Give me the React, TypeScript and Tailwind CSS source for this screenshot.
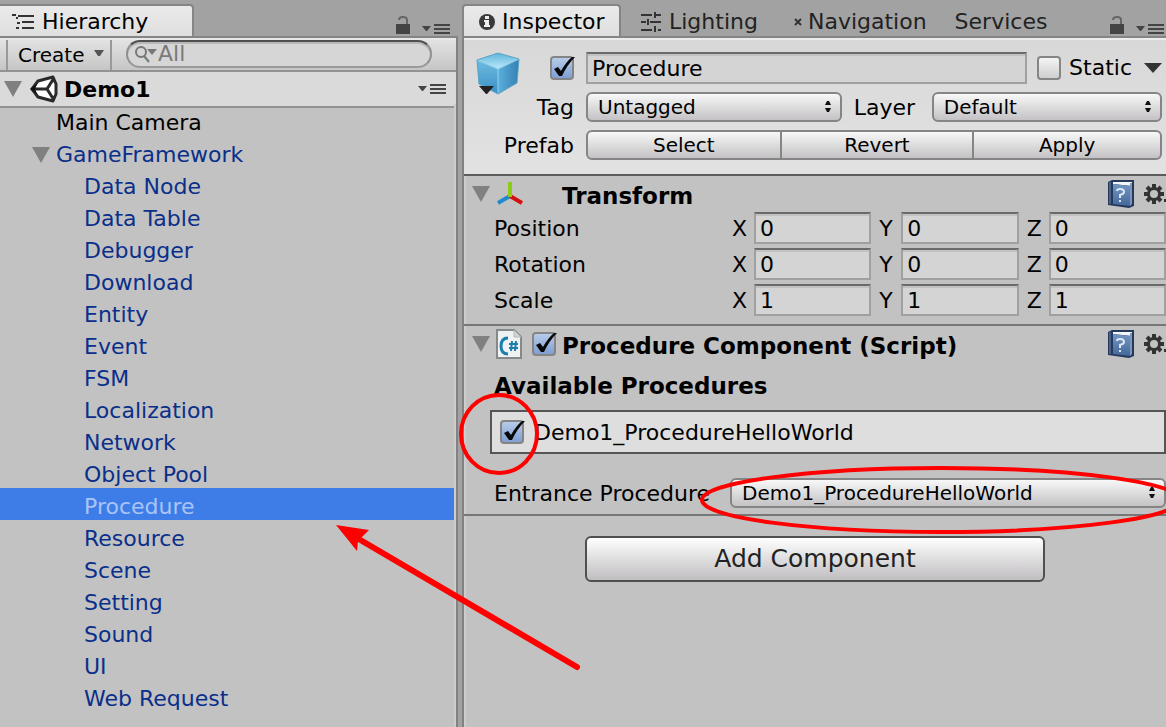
import { useState } from 'react';
import type { ReactNode } from 'react';
import clsx from 'clsx';

const CHILDREN = [
  'Data Node',
  'Data Table',
  'Debugger',
  'Download',
  'Entity',
  'Event',
  'FSM',
  'Localization',
  'Network',
  'Object Pool',
  'Procedure',
  'Resource',
  'Scene',
  'Setting',
  'Sound',
  'UI',
  'Web Request',
];

const TRANSFORM = [
  { label: 'Position', values: ['0', '0', '0'] },
  { label: 'Rotation', values: ['0', '0', '0'] },
  { label: 'Scale', values: ['1', '1', '1'] },
];

const AXES = ['X', 'Y', 'Z'];

const FIELD =
  'min-w-0 border-2 border-t-[#6a6a6a] border-x-[#a0a0a0] border-b-[#a0a0a0] bg-[#d4d4d4] px-1 outline-none shadow-[inset_0_2px_0_#c2c2c2]';

/* ---------- icons ---------- */

const Foldout = () => (
  <svg viewBox="0 0 18 16" className="h-4 w-[18px] shrink-0">
    <path d="M0 0H18L9 16Z" fill="#808080" />
  </svg>
);

const HierarchyIcon = () => (
  <svg viewBox="0 0 24 18" className="h-[18px] w-6 shrink-0" fill="#333">
    <path d="M0 1h4v2H0zM6 2h16v2H6zM4 4h2v2H4zM10 8h12v2H10zM5 9h3v2H5zM4 14h3v2H4zM10 14h12v2H10z" />
  </svg>
);

const LockIcon = () => (
  <svg viewBox="0 0 14 18" className="h-[18px] w-3.5 shrink-0">
    <path d="M3 4Q3 1 7 1Q11 1 11 4V9" fill="none" stroke="#666" strokeWidth="2" />
    <path d="M0 8H14V18H0Z" fill="#444" />
  </svg>
);

const MenuIcon = () => (
  <svg viewBox="0 0 28 10" className="h-2.5 w-7 shrink-0" fill="#444">
    <path d="M0 2H9L5 7H4ZM12 0H28V2H12ZM12 4H28V6H12ZM12 8H28V10H12Z" />
  </svg>
);

const UnityIcon = () => (
  <svg viewBox="0 0 28 28" className="size-7 shrink-0">
    <path d="M2 14L8 6L23 1L27 14L23 27L8 22Z" fill="#fff" />
    <path
      d="M2 14L8 6L23 2L26 9V19L23 26L8 22Z M3 14H17M17 14L24 3M17 14L24 25"
      fill="none"
      stroke="#2a2a2a"
      strokeWidth="3"
      strokeLinejoin="round"
    />
    <path d="M0 14L7 9L5 14L7 19Z" fill="#111" />
  </svg>
);

const InfoIcon = () => (
  <svg viewBox="0 0 18 18" className="size-[18px] shrink-0">
    <circle cx="9" cy="9" r="8" fill="#3a3a3a" />
    <path d="M7 3h4v3H7zM6 7h5v5h1v2H6v-2h1V9H6z" fill="#eee" />
  </svg>
);

const SlidersIcon = () => (
  <svg viewBox="0 0 20 22" className="h-[22px] w-5 shrink-0" fill="#333">
    <path d="M0 3h11v2H0zM13 1h2v6h-2zM15 3h5v2h-5zM0 10h5v2H0zM6 8h2v6H6zM9 10h11v2H9zM0 18h11v2H0zM13 15h2v6h-2zM17 18h3v2h-3z" />
  </svg>
);

const CubeIcon = () => (
  <svg viewBox="0 0 44 44" className="size-11 shrink-0">
    <defs>
      <linearGradient id="cubeTop" x1="0" y1="0" x2="0" y2="1">
        <stop offset="0" stopColor="#5fb4da" />
        <stop offset="1" stopColor="#bdeafa" />
      </linearGradient>
      <linearGradient id="cubeLeft" x1="0" y1="0" x2="0" y2="1">
        <stop offset="0" stopColor="#6fbce2" />
        <stop offset="1" stopColor="#3b8fc3" />
      </linearGradient>
      <linearGradient id="cubeRight" x1="0" y1="0" x2="1" y2="0">
        <stop offset="0" stopColor="#5cb0db" />
        <stop offset="1" stopColor="#347fb3" />
      </linearGradient>
    </defs>
    <path d="M1 8L22 1L43 7L22 17Z" fill="url(#cubeTop)" />
    <path d="M1 8L22 17V42L3 32Z" fill="url(#cubeLeft)" />
    <path d="M22 17L43 7L41 31L22 42Z" fill="url(#cubeRight)" />
    <path d="M1 8L22 17L43 7M22 17V42" fill="none" stroke="#8fd2ee" strokeWidth="1" />
    <path d="M1 8L22 1L43 7L41 31L22 42L3 32Z" fill="none" stroke="#5ba3c8" strokeWidth="1" />
    <path d="M3 34H18L11 42H10Z" fill="#222" />
  </svg>
);

const AxesIcon = () => (
  <svg viewBox="0 0 28 26" className="h-[26px] w-7 shrink-0" fill="none" strokeWidth="4">
    <path d="M14 15L2 22" stroke="#2189cf" />
    <path d="M14 15L26 22" stroke="#d40f0f" />
    <path d="M14 1V16" stroke="#8ccc16" />
  </svg>
);

const ScriptIcon = () => (
  <svg viewBox="0 0 26 30" className="h-[30px] w-[26px] shrink-0" fill="none">
    <path d="M1 1H18L25 8V29H1Z" fill="#eef2f2" stroke="#85898a" strokeWidth="2" />
    <path d="M18 1V8H25" fill="#cfd4d5" stroke="#b5b9ba" />
    <path d="M12 9Q5 9 5 17Q5 25 12 25" stroke="#1b7fae" strokeWidth="3" />
    <path d="M16 12L15 22M20 12L19 22M13 15H22M13 19H22" stroke="#1b7fae" strokeWidth="2" />
  </svg>
);

const BookIcon = () => (
  <svg viewBox="0 0 26 28" className="h-7 w-[26px] shrink-0">
    <defs>
      <linearGradient id="bookCover" x1="0" y1="0" x2="0" y2="1">
        <stop offset="0" stopColor="#7296c2" />
        <stop offset="1" stopColor="#456799" />
      </linearGradient>
    </defs>
    <path d="M0 2L4 0H26V26L21 28L0 25Z" fill="#24395c" />
    <path d="M5 2H24V6L5 4Z" fill="#f4f7fa" />
    <path d="M22 3H24V24L22 26Z" fill="#7d97bb" />
    <path d="M5 4L22 6V26L5 24Z" fill="url(#bookCover)" />
    <path d="M2 2V24" stroke="#7088ac" strokeWidth="1" />
    <path d="M9 11Q9 9 12 9Q16 9 16 12Q16 14 12 15V18M12 20V22" fill="none" stroke="#dce8f6" strokeWidth="2" />
  </svg>
);

const GearIcon = () => (
  <svg viewBox="0 0 22 20" className="h-5 w-[22px] shrink-0" fill="none" stroke="#333">
    <circle cx="10" cy="10" r="5.5" strokeWidth="3" />
    <path
      d="M10 0V4M10 16V20M0 10H4M16 10H20M3 3L6 6M14 14L17 17M17 3L14 6M6 14L3 17"
      strokeWidth="4"
    />
    <path d="M20 15H22V18H20Z" fill="#333" stroke="none" />
  </svg>
);

/* ---------- controls ---------- */

function Checkbox({ label, defaultChecked = false }: { label: string; defaultChecked?: boolean }) {
  return (
    <span className="relative block size-6 shrink-0">
      <input
        type="checkbox"
        aria-label={label}
        defaultChecked={defaultChecked}
        className="peer block size-6 appearance-none rounded-sm border-2 border-[#858585] bg-linear-to-b from-[#f4f4f4] to-[#cfcfcf] checked:from-[#b6cbe8] checked:to-[#7f9fd2]"
      />
      <svg
        viewBox="0 0 24 24"
        className="pointer-events-none absolute inset-0 hidden size-6 overflow-visible peer-checked:block"
      >
        <path d="M4 13L8 11L11 15Q16 6 22 1H25Q17 9 12 20H9Z" fill="#080808" />
      </svg>
    </span>
  );
}

function Popup({ label, value, className }: { label: string; value: string; className?: string }) {
  return (
    <span className={clsx('relative block min-w-0', className)}>
      <select
        aria-label={label}
        className="block h-[30px] w-full appearance-none rounded-md border-2 border-[#858585] bg-linear-to-b from-[#f8f8f8] to-[#c4c2c4] pl-2.5 text-[20px] leading-6 outline-none"
      >
        <option>{value}</option>
      </select>
      <svg viewBox="0 0 8 14" className="pointer-events-none absolute top-2 right-2.5 h-3.5 w-2">
        <path d="M1 5L3 1H5L7 5ZM1 8H7L5 12H3Z" fill="#111" />
      </svg>
    </span>
  );
}

function ComponentHeader({ title, children }: { title: string; children: ReactNode }) {
  return (
    <div className="flex h-9 items-center pl-2">
      <Foldout />
      <div className="ml-1.5 flex w-[66px] shrink-0 items-center gap-2.5">{children}</div>
      <h2 className="flex-1 pt-1 text-[23px] leading-8 font-bold whitespace-nowrap">{title}</h2>
      <BookIcon />
      <span className="ml-2.5">
        <GearIcon />
      </span>
    </div>
  );
}

/* ---------- panels ---------- */

function Hierarchy() {
  const [selected, setSelected] = useState('Procedure');

  return (
    <section className="flex min-w-0 flex-col">
      <div className="flex h-[38px] items-end border-b-2 border-[#858585]">
        <div className="flex h-8 w-[194px] items-center gap-1.5 rounded-tr border-t-2 border-r-2 border-[#858585] bg-linear-to-b from-[#eaeaea] to-[#dfdfdf] pt-0.5 pl-3">
          <HierarchyIcon />
          <span>Hierarchy</span>
        </div>
        <div className="flex flex-1 items-end justify-end gap-3 pr-2 pb-0.5">
          <LockIcon />
          <MenuIcon />
        </div>
      </div>
      <div className="flex flex-1 flex-col border-r-2 border-[#828282] bg-[#c2c2c2]">
        <div className="flex h-[34px] items-center border-t-2 border-b-2 border-t-[#e8e8e8] border-b-[#939393] bg-linear-to-b from-[#e2e2e2] to-[#c6c6c6] pl-1.5">
          <button className="flex h-full w-[106px] shrink-0 items-center justify-between border-x-2 border-[#999] pr-1.5 pl-2.5 text-[20px] leading-6">
            Create
            <svg viewBox="0 0 10 6" className="mb-1 h-1.5 w-2.5">
              <path d="M0 0H10L6 6H4Z" fill="#555" />
            </svg>
          </button>
          <div className="mr-6 mb-0.5 ml-3.5 flex h-7 min-w-0 flex-1 items-center rounded-full border-2 border-t-[#4f4f4f] border-x-[#8f8f8f] border-b-[#9a9a9a] bg-[#d6d6d6] pl-1.5 shadow-[inset_0_2px_0_#b8b8b8]">
            <svg viewBox="0 0 24 18" className="h-[18px] w-6 shrink-0">
              <circle cx="7" cy="7" r="5" fill="none" stroke="#777" strokeWidth="2" />
              <path d="M10 11L15 17" stroke="#777" strokeWidth="2" />
              <path d="M13 4H23L18 10Z" fill="#777" />
            </svg>
            <input
              type="text"
              aria-label="Search hierarchy"
              placeholder="All"
              className="min-w-0 flex-1 bg-transparent leading-6 outline-none placeholder:text-[#7a7a7a]"
            />
          </div>
        </div>
        <div className="flex h-9 items-center border-b-2 border-[#939393] bg-[#dadada] pr-2.5 pl-1">
          <Foldout />
          <span className="ml-2">
            <UnityIcon />
          </span>
          <span className="ml-1.5 flex-1 pt-0.5 font-bold">Demo1</span>
          <MenuIcon />
        </div>
        <ul className="-mt-1 flex-1 border-r-2 border-[#cdcdcd] text-[#0a2f8a]">
          <li className="flex h-8 items-center pt-1.5 pl-14 text-black">Main Camera</li>
          <li className="flex h-8 items-center gap-1.5 pt-1.5 pl-8">
            <Foldout />
            GameFramework
          </li>
          {CHILDREN.map((name) => (
            <li key={name}>
              <button
                onClick={() => setSelected(name)}
                className={clsx(
                  'flex h-8 w-full items-center pt-1.5 pl-[84px]',
                  selected === name && 'bg-[#3e7de7] text-[#a9c4f5]'
                )}
              >
                {name}
              </button>
            </li>
          ))}
        </ul>
      </div>
    </section>
  );
}

function Inspector() {
  return (
    <section className="flex min-w-0 flex-col">
      <div className="flex h-[38px] items-end border-b-2 border-[#858585] text-[#222]">
        <div className="flex h-8 w-[159px] shrink-0 items-center gap-1.5 rounded-t border-2 border-b-0 border-[#858585] bg-linear-to-b from-[#eaeaea] to-[#dfdfdf] pt-0.5 pl-3.5 text-black">
          <InfoIcon />
          <span>Inspector</span>
        </div>
        <div className="flex h-8 items-center gap-2 pt-1 pl-5">
          <SlidersIcon />
          Lighting
        </div>
        <div className="flex h-8 items-center gap-1.5 pt-1 pl-9">
          <svg viewBox="0 0 8 8" className="size-2">
            <path d="M1 1L7 7M7 1L1 7" stroke="#333" strokeWidth="2" />
          </svg>
          Navigation
        </div>
        <div className="flex h-8 items-center pt-1 pl-7">Services</div>
        <div className="flex flex-1 items-end justify-end gap-3 pr-0.5 pb-0.5">
          <LockIcon />
          <MenuIcon />
        </div>
      </div>

      <div className="flex-1 border-l-2 border-[#828282] bg-[#c2c2c2] shadow-[inset_2px_0_0_#cdcdcd]">
        <div className="flex h-[138px] border-t-2 border-b-2 border-t-[#ececec] border-b-[#5c5c5c] bg-linear-to-b from-[#d8d8d8] to-[#e2e2e2] pt-3 pr-1 pl-3">
          <CubeIcon />
          <div className="flex flex-1 flex-col gap-2">
            <div className="flex h-8 items-center">
              <div className="flex w-[66px] shrink-0 justify-end pr-3">
                <Checkbox label="Active" defaultChecked />
              </div>
              <input type="text" aria-label="Name" defaultValue="Procedure" className={clsx('h-8 flex-1', FIELD)} />
              <label className="ml-2.5 flex items-center gap-2">
                <Checkbox label="Static" />
                Static
              </label>
              <svg viewBox="0 0 18 10" className="ml-3 h-2.5 w-[18px]">
                <path d="M0 0H18L9 10Z" fill="#333" />
              </svg>
            </div>
            <div className="flex h-[30px] items-center">
              <span className="w-[66px] shrink-0 pt-0.5 pr-3 text-right">Tag</span>
              <Popup label="Tag" value="Untagged" className="flex-[10]" />
              <span className="w-[90px] shrink-0 pt-0.5 pl-3">Layer</span>
              <Popup label="Layer" value="Default" className="flex-[9]" />
            </div>
            <div className="flex h-[30px] items-center">
              <span className="flex w-[66px] shrink-0 justify-end pt-0.5 pr-3">Prefab</span>
              <div className="grid h-[30px] flex-1 grid-cols-[195fr_194fr_187fr] divide-x-2 divide-[#858585] overflow-hidden rounded-md border-2 border-[#858585] bg-linear-to-b from-[#f8f8f8] to-[#c4c2c4] text-[20px] leading-6">
                <button>Select</button>
                <button>Revert</button>
                <button>Apply</button>
              </div>
            </div>
          </div>
        </div>

        <div className="border-b-2 border-[#777] pb-2">
          <ComponentHeader title="Transform">
            <AxesIcon />
          </ComponentHeader>
          <div className="flex flex-col gap-1">
            {TRANSFORM.map((row) => (
              <div key={row.label} className="flex h-8 items-center pl-[30px]">
                <span className="w-[238px] shrink-0 pt-0.5">{row.label}</span>
                <div className="grid flex-1 grid-cols-3 gap-2">
                  {AXES.map((axis, i) => (
                    <label key={axis} className="flex min-w-0 items-center">
                      <span className="w-[22px] shrink-0 pt-0.5">{axis}</span>
                      <input
                        type="text"
                        aria-label={`${row.label} ${axis}`}
                        defaultValue={row.values[i]}
                        className={clsx('h-8 flex-1', FIELD)}
                      />
                    </label>
                  ))}
                </div>
              </div>
            ))}
          </div>
        </div>

        <div className="border-b-2 border-[#777] pb-1.5">
          <ComponentHeader title="Procedure Component (Script)">
            <ScriptIcon />
            <Checkbox label="Enabled" defaultChecked />
          </ComponentHeader>
          <h3 className="mt-2 pl-[30px] text-[23px] leading-8 font-bold">Available Procedures</h3>
          <label className="mt-2 ml-[26px] flex h-11 items-center gap-2.5 border-2 border-[#555] bg-[#dedede] pl-2">
            <Checkbox label="Demo1_ProcedureHelloWorld" defaultChecked />
            <span className="pt-0.5">Demo1_ProcedureHelloWorld</span>
          </label>
          <div className="mt-6 flex h-[30px] items-center pl-[30px]">
            <span className="w-[236px] shrink-0 pt-0.5 whitespace-nowrap">Entrance Procedure</span>
            <Popup label="Entrance Procedure" value="Demo1_ProcedureHelloWorld" className="flex-1" />
          </div>
        </div>

        <div className="flex justify-center pt-5">
          <button className="h-[46px] w-[460px] rounded-md border-2 border-[#4f4f4f] bg-linear-to-b from-white to-[#c0bec0] text-[25px] leading-8 text-[#222]">
            Add Component
          </button>
        </div>
      </div>
    </section>
  );
}

// Red marker strokes drawn over both panels
const Annotations = () => (
  <svg
    viewBox="0 0 1166 727"
    className="pointer-events-none absolute top-0 left-0 h-[727px] w-[1166px] max-w-none"
    fill="none"
    stroke="#f00"
    strokeWidth="4"
  >
    <ellipse cx="499" cy="434" rx="38" ry="39" />
    <ellipse cx="941" cy="500" rx="239" ry="32" />
    <path d="M577 667L357 538" strokeWidth="6" strokeLinecap="round" />
    <path d="M336 525L369 530L361 538L358 541L357 551Z" fill="#f00" stroke="none" />
  </svg>
);

export default function App() {
  return (
    <main className="relative grid min-h-screen grid-cols-[minmax(0,458fr)_minmax(0,704fr)] gap-x-1 overflow-hidden bg-[#a2a2a2] font-['DejaVu_Sans',sans-serif] text-[22px] leading-7 text-black">
      <Hierarchy />
      <Inspector />
      <Annotations />
    </main>
  );
}
